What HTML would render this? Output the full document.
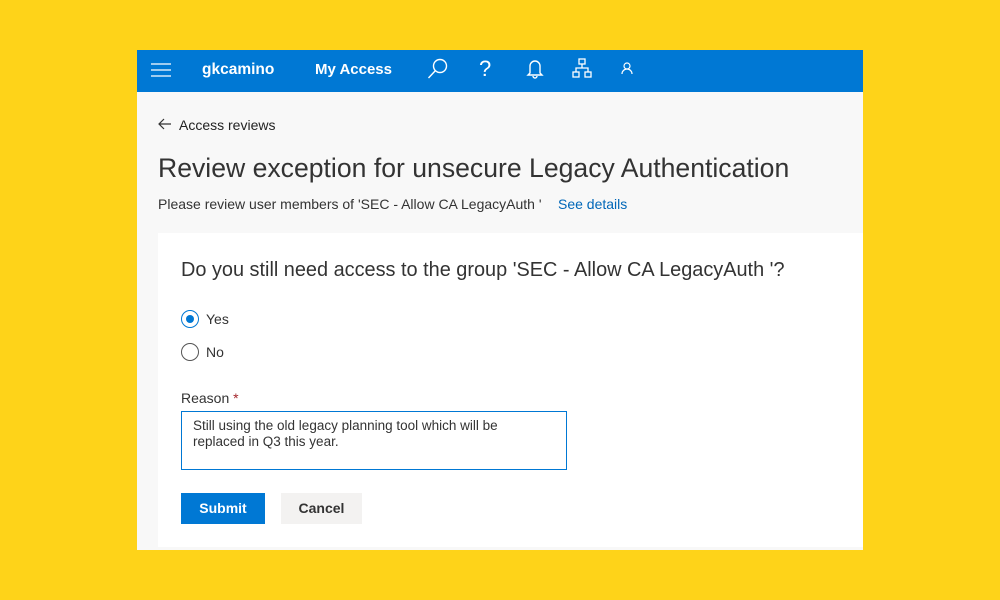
<!DOCTYPE html>
<html><head><style>
body{margin:0;width:1000px;height:600px;background:#FED319;font-family:"Liberation Sans",sans-serif;position:relative;overflow:hidden}
.p{position:absolute;left:137px;top:50px;width:726px;height:500px;background:#f8f8f8}
.nav{position:absolute;left:0;top:0;width:726px;height:42px;background:#0078d4;color:#fff}
.t{position:absolute;white-space:nowrap}
.card{position:absolute;left:21px;top:183px;width:705px;height:314px;background:#fff}
.radio{position:absolute;width:16px;height:16px;border:1px solid #555;border-radius:50%;background:#fff}
</style></head><body>
<div class="p">
<div class="nav">
<svg class="t" style="left:14px;top:12px" width="20" height="16"><path d="M0 2h20M0 8h20M0 14h20" stroke="#fff" stroke-width="1.3"/></svg>
<div class="t" style="left:65px;top:11px;font-size:15.5px;font-weight:bold">gkcamino</div>
<div class="t" style="left:178px;top:11px;font-size:15px;font-weight:bold">My Access</div>
<svg class="t" style="left:290px;top:8px" width="22" height="22" fill="none" stroke="#fff" stroke-width="1.4"><circle cx="13" cy="8" r="6.5"/><path d="M8.5 12.5L1.5 20"/></svg>
<div class="t" style="left:342px;top:6px;font-size:22px;font-weight:300">?</div>
<svg class="t" style="left:389px;top:9px" width="18" height="20" fill="none" stroke="#fff" stroke-width="1.4"><path d="M4 14V7a5 5 0 0 1 10 0v7l2 2H2zM7 17a2 2 0 0 0 4 0"/></svg>
<svg class="t" style="left:435px;top:8px" width="20" height="20" fill="none" stroke="#fff" stroke-width="1.3"><rect x="7" y="1" width="6" height="5"/><rect x="1" y="14" width="6" height="5"/><rect x="13" y="14" width="6" height="5"/><path d="M10 6v4M4 14v-4h12v4"/></svg>
<svg class="t" style="left:484px;top:12px" width="12" height="14" fill="none" stroke="#fff" stroke-width="1.2"><circle cx="6" cy="4" r="3"/><path d="M1 12a5 5 0 0 1 10 0"/></svg>
</div>
<svg class="t" style="left:21px;top:68px" width="14" height="12" fill="none" stroke="#333" stroke-width="1.2"><path d="M13 6H1M6 1L1 6l5 5"/></svg>
<div class="t" style="left:42px;top:67px;font-size:14px;color:#222">Access reviews</div>
<div class="t" style="left:21px;top:103px;font-size:26.6px;color:#333">Review exception for unsecure Legacy Authentication</div>
<div class="t" style="left:21px;top:146px;font-size:14px;color:#333">Please review user members of 'SEC - Allow CA LegacyAuth '</div>
<div class="t" style="left:421px;top:146px;font-size:14px;color:#0067b8">See details</div>
<div class="card">
<div class="t" style="left:23px;top:26px;font-size:19.9px;color:#333">Do you still need access to the group 'SEC - Allow CA LegacyAuth '?</div>
<div class="radio" style="left:23px;top:77px;border-color:#0078d4"><div style="position:absolute;left:4px;top:4px;width:8px;height:8px;border-radius:50%;background:#0078d4"></div></div>
<div class="t" style="left:48px;top:78px;font-size:14px;color:#333">Yes</div>
<div class="radio" style="left:23px;top:110px"></div>
<div class="t" style="left:48px;top:111px;font-size:14px;color:#333">No</div>
<div class="t" style="left:23px;top:157px;font-size:14px;color:#333">Reason <span style="color:#a4262c">*</span></div>
<div style="position:absolute;left:23px;top:178px;width:384px;height:57px;border:1px solid #0078d4;background:#fff"></div>
<div class="t" style="left:35px;top:185px;font-size:13.5px;color:#333;line-height:16px">Still using the old legacy planning tool which will be<br>replaced in Q3 this year.</div>
<div style="position:absolute;left:23px;top:260px;width:84px;height:31px;background:#0078d4;color:#fff;font-size:14px;font-weight:bold;text-align:center;line-height:31px">Submit</div>
<div style="position:absolute;left:123px;top:260px;width:81px;height:31px;background:#f3f2f1;color:#333;font-size:14px;font-weight:bold;text-align:center;line-height:31px">Cancel</div>
</div>
</div>
</body></html>
